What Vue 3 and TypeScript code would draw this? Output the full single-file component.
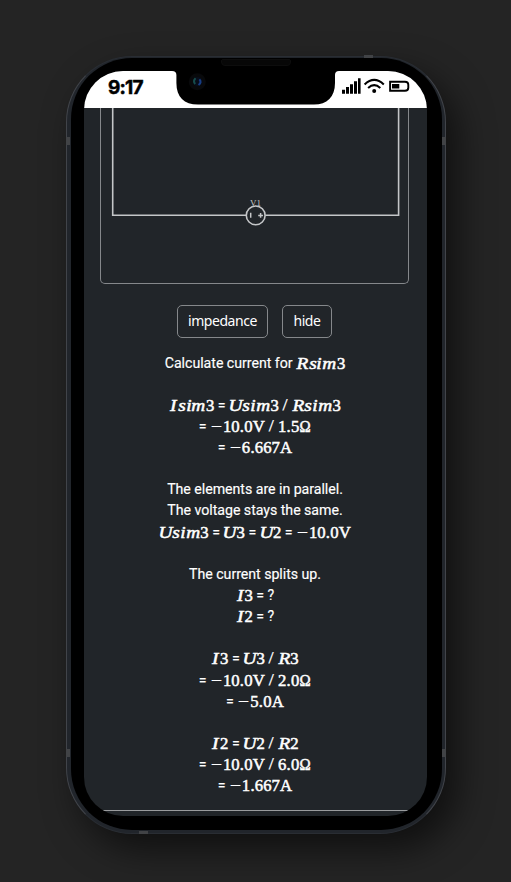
<script setup lang="ts">
type Segment = { kind: 'text' | 'math'; value: string }

const t = (value: string): Segment => ({ kind: 'text', value })
const m = (value: string): Segment => ({ kind: 'math', value })

const lines: Segment[][] = [
  [t('Calculate current for '), m('Rsim3')],
  [],
  [m('Isim3'), t(' = '), m('Usim3'), t(' / '), m('Rsim3')],
  [t('= '), m('−10.0V'), t(' / '), m('1.5Ω')],
  [t('= '), m('−6.667A')],
  [],
  [t('The elements are in parallel.')],
  [t('The voltage stays the same.')],
  [m('Usim3'), t(' = '), m('U3'), t(' = '), m('U2'), t(' = '), m('−10.0V')],
  [],
  [t('The current splits up.')],
  [m('I3'), t(' = ?')],
  [m('I2'), t(' = ?')],
  [],
  [m('I3'), t(' = '), m('U3'), t(' / '), m('R3')],
  [t('= '), m('−10.0V'), t(' / '), m('2.0Ω')],
  [t('= '), m('−5.0A')],
  [],
  [m('I2'), t(' = '), m('U2'), t(' / '), m('R2')],
  [t('= '), m('−10.0V'), t(' / '), m('6.0Ω')],
  [t('= '), m('−1.667A')],
]

// Advance widths of math glyphs, in em
const advance: Record<string, number> = {
  R: 0.759, I: 0.518, U: 0.792, s: 0.469, i: 0.345, m: 0.878,
  '.': 0.278, '−': 0.778, V: 0.75, A: 0.75, Ω: 0.722,
}
const width = (c: string) => `${advance[c] ?? 0.5}em`
const isItalic = (c: string) => 'RIUsim'.includes(c)
</script>

<template>
  <main class="stage">
    <div class="phone">
      <i class="band top"></i><i class="band bottom"></i>
      <i class="band left upper"></i><i class="band left lower"></i>
      <i class="band right upper"></i><i class="band right lower"></i>
      <div class="bezel">
        <div class="screen">
          <header class="status">
            <span class="time">9:17</span>
            <svg class="icons" width="70" height="20" viewBox="0 0 70 20">
              <path d="M2 13.7h3v4H2zM6 11h3v6.7H6zM10 8.3h3v9.4h-3zM14 5.3h3v12.4h-3zM18 2.3h2.6v15.4H18z" />
              <g fill="none" stroke="#000" stroke-width="2.1">
                <path d="M24.6 8.4Q34.2 -0.6 43.8 8.4" />
                <path d="M28.1 12Q34.2 6.4 40.3 12" />
              </g>
              <circle cx="34.2" cy="15.1" r="2" />
              <path d="M50.1 5.7H65q3.3 0 3.3 3v3q0 3-3.3 3H50.1z" fill="none" stroke="#000" stroke-width="1.9" />
              <path d="M52 8h7.3v4.4H52z" />
            </svg>
          </header>
          <section class="content">
            <div class="schematic">
              <svg width="307" height="175" viewBox="101 108 307 175">
                <g fill="none" stroke="#c4c6c8" stroke-width="1.6">
                  <path d="M112.7 108V215.3H246M265.4 215.3H398.6V108" />
                  <circle cx="255.7" cy="215.4" r="9.4" stroke-width="1.6" />
                  <path d="M250.7 212.8v5M258.2 215.4h4.8M260.6 213v4.8" stroke-width="1.5" />
                </g>
                <text x="255.6" y="206" text-anchor="middle" class="label">V1</text>
              </svg>
            </div>
            <div class="actions">
              <button class="wide">impedance</button>
              <button class="narrow">hide</button>
            </div>
            <div class="solution">
              <div v-for="(line, n) in lines" :key="n" class="line">
                <template v-for="(seg, k) in line" :key="k">
                  <span v-if="seg.kind === 'text'">{{ seg.value }}</span>
                  <span v-else class="math"><span
                    v-for="(c, j) in seg.value" :key="j" class="glyph"
                    :class="{ italic: isItalic(c), minus: c === '−', omega: c === 'Ω' }" :style="{ width: width(c) }"
                  >{{ c }}</span></span>
                </template>
              </div>
            </div>
            <hr class="divider" />
          </section>
          <svg class="notch" width="167" height="38" viewBox="172 69 167 38">
            <path d="M172 69H339V71Q335 71 335 75V83C335 97 327 104.6 314 104.6H198C184 104.6 176.4 97 176.4 83V75Q176.4 71 172 71Z" />
            <circle cx="197.3" cy="81.8" r="8.5" fill="#08090b" />
            <circle cx="197.5" cy="81.6" r="4.6" fill="#070d1a" />
            <path d="M195.6 78.2Q192.6 81 195.2 84" fill="none" stroke="#164c4c" stroke-width="2" />
            <path d="M199.4 79.4Q202 82.4 198.5 85" fill="none" stroke="#173d84" stroke-width="2.1" />
          </svg>
        </div>
        <i class="speaker"></i>
      </div>
    </div>
  </main>
</template>

<style>
body { background: #242424; }
</style>

<style scoped>
* { box-sizing: border-box; }
.stage {
  height: 882px;
  padding: 55.5px 0 0 66px;
  overflow: hidden;
  background: #242424;
}
.phone {
  position: relative;
  width: 380px;
  height: 778px;
  padding: 1px 3px 3px 4px;
  border: 1px solid #41444a;
  border-top-color: #292d33;
  border-bottom-color: #292d33;
  border-radius: 66px;
  background: #21252b;
  box-shadow: 12px 16px 34px rgba(0, 0, 0, 0.55);
}
.bezel {
  position: relative;
  height: 100%;
  padding: 13px 14px 13px 13px;
  border-radius: 61px;
  background: #000;
}
.screen {
  position: relative;
  display: flex;
  flex-direction: column;
  width: 343px;
  height: 745px;
  overflow: hidden;
  border-radius: 39px;
  background: #212529;
}
.status {
  display: flex;
  flex: none;
  justify-content: space-between;
  height: 37px;
  padding: 5px 17px 0 24px;
  background: #fff;
}
.time {
  padding-top: 1.5px;
  font: 700 19px/22px Inter, sans-serif;
  letter-spacing: -0.8px;
  color: #000;
  -webkit-text-stroke: 0.5px #000;
}
.notch { position: absolute; left: 88px; top: -2px; }
.speaker {
  position: absolute;
  left: 150px;
  top: 1px;
  width: 70px;
  height: 7px;
  border: 1px solid #0d0d0d;
  border-radius: 2px 2px 4px 4px;
  background: #070707;
}
.band { position: absolute; background: #414346; }
.band.top { left: 297px; top: -2px; width: 9px; height: 3px; }
.band.bottom { left: 72px; bottom: -1px; width: 9px; height: 3px; }
.band.left { left: -1px; width: 4px; height: 8px; }
.band.right { right: -1px; width: 4px; height: 8px; }
.upper { top: 80px; }
.lower { top: 692px; }
.content {
  display: flex;
  flex-direction: column;
  align-items: center;
  padding-right: 2px;
}
.schematic {
  width: 309px;
  height: 176px;
  border: 1px solid #85888b;
  border-top: 0;
  border-radius: 0 0 5px 5px;
}
.schematic svg { display: block; }
.label {
  font: 9px "Liberation Serif", serif;
  fill: #c4c6c8;
}
.actions {
  display: flex;
  gap: 14px;
  padding-top: 21px;
}
button {
  height: 33px;
  padding: 0;
  border: 1px solid #85888b;
  border-radius: 5px;
  background: transparent;
  color: #fff;
  font: 14px/20px "Noto Sans", sans-serif;
  letter-spacing: -0.45px;
}
.wide { width: 91px; }
.narrow { width: 50px; }
.solution {
  padding: 15px 0 0 1px;
  font: 14.2px/21.15px Roboto, sans-serif;
  letter-spacing: -0.04px;
  color: #fff;
  -webkit-text-stroke: 0.15px #fff;
}
.line {
  display: flex;
  justify-content: center;
  height: 21.15px;
  white-space: pre;
}
.math {
  display: flex;
  font-family: "Liberation Serif", serif;
  font-size: 16.7px;
  letter-spacing: 0;
  -webkit-text-stroke: 0.5px #fff;
}
.glyph { display: flex; justify-content: center; }
.italic { font-style: italic; transform: scaleX(1.16); }
.minus { transform: scaleX(1.25); -webkit-text-stroke: 0; }
.omega { transform: scaleX(0.9); }
.divider {
  align-self: stretch;
  height: 1px;
  margin: 14px -2px 0 0;
  border: 0;
  background: #9a9c9e;
}
</style>
